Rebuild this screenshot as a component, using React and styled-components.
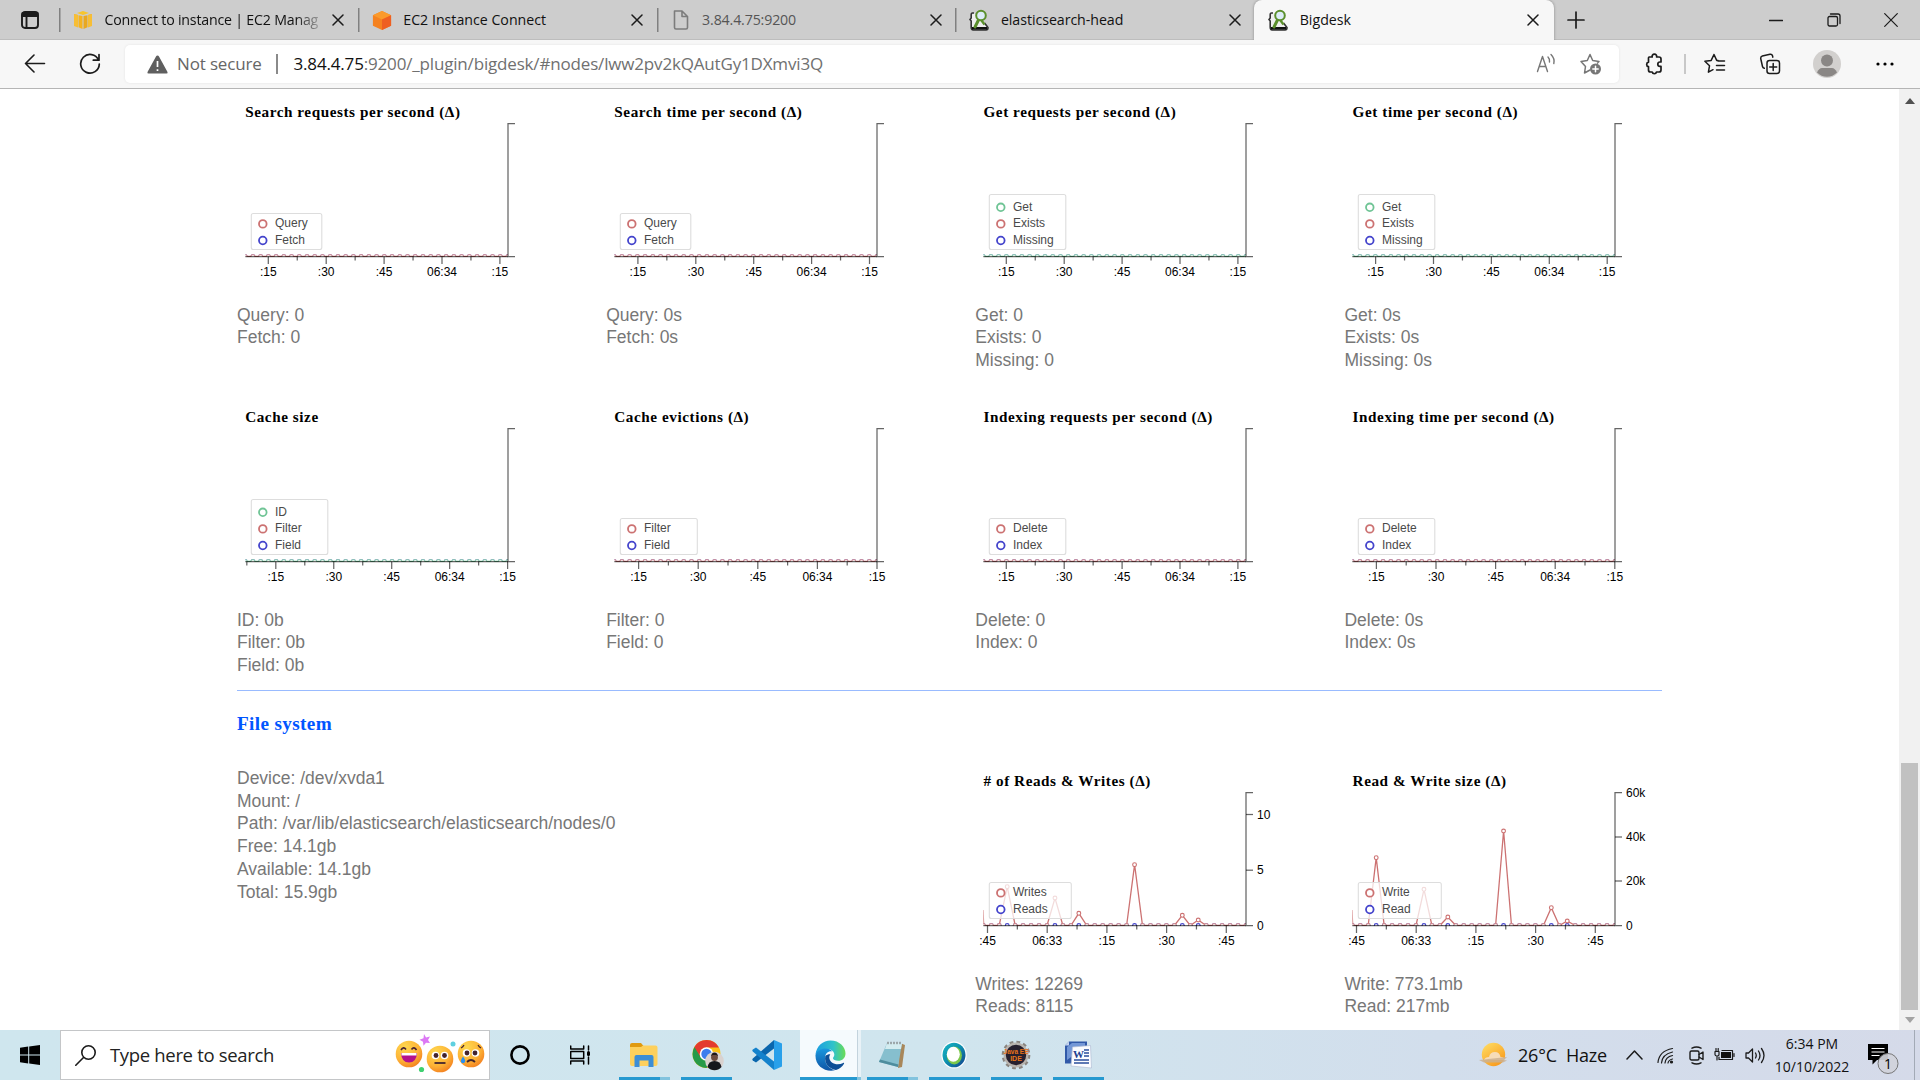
import React from "react";
import styled, { createGlobalStyle, css } from "styled-components";

const Global = createGlobalStyle`
  * { box-sizing: border-box; }
  html, body { margin: 0; padding: 0; overflow: hidden; background: #fff; }
  svg { display: block; flex: none; }
`;

const ui = `"Segoe UI", "Open Sans", "Noto Sans", sans-serif`;
const sans = `"Liberation Sans", Arial, sans-serif`;
const serif = `"Liberation Serif", "Times New Roman", serif`;

const Screen = styled.div`
  width: 1920px;
  height: 1080px;
  display: flex;
  flex-direction: column;
  overflow: hidden;
  font-family: ${ui};
`;

/* ---------- tab strip ---------- */
const TabStrip = styled.div`
  display: flex;
  height: 40px;
  background: #cdcdcd;
  box-shadow: inset 0 -1px 0 #bdbdbd;
`;
const TabActions = styled.div`
  width: 59px;
  display: flex;
  align-items: center;
  padding-left: 20px;
`;
const Tab = styled.div`
  width: 298.8px;
  height: 40px;
  display: flex;
  align-items: center;
  padding: 0 13.5px 0 14px;
  color: ${(p) => p.$color || "#111"};
  background: linear-gradient(#808080, #808080) 0 8px / 1.5px 24px no-repeat;
  ${(p) =>
    p.$active &&
    css`
      background: #f7f7f7;
      border-radius: 8px 8px 0 0;
      width: 300px;
      padding-right: 15px;
      box-shadow: 0 0 3px rgba(0, 0, 0, 0.35);
      clip-path: inset(0 -4px 0 -4px);
    `}
`;
const TabLabel = styled.div`
  flex: 1;
  margin: 0 10px 0 11.500px;
  overflow: hidden;
  white-space: nowrap;
  font-size: 14.2px;
  line-height: 22px;
  letter-spacing: ${(p) => p.$ls || 0}px;
  ${(p) => p.$fade && css`mask-image: linear-gradient(90deg, #000 88%, transparent 102%);`}
`;
const NewTab = styled.div`
  width: 44px;
  display: flex;
  align-items: center;
  justify-content: center;
`;
const WindowButtons = styled.div`
  margin-left: auto;
  display: flex;
`;
const WindowButton = styled.div`
  width: 57.5px;
  display: flex;
  align-items: center;
  justify-content: center;
`;

/* ---------- toolbar ---------- */
const Toolbar = styled.div`
  height: 49px;
  display: flex;
  align-items: center;
  background: #f7f7f7;
  border-bottom: 1px solid #b5b5b5;
`;
const NavButton = styled.div`
  width: ${(p) => p.$w || 55}px;
  display: flex;
  justify-content: center;
`;
const AddressBar = styled.div`
  width: 1494px;
  height: 38px;
  display: flex;
  align-items: center;
  background: #fff;
  border-radius: 5px;
  box-shadow: 0 0 3px rgba(0, 0, 0, 0.08);
  padding: 0 17px 0 22px;
  font-size: 17px;
  color: #707070;
`;
const Security = styled.span`
  margin-left: 9px;
  width: 99px;
  padding-bottom: 2px;
  letter-spacing: ${(p) => p.$ls}px;
  color: #666;
  white-space: nowrap;
`;
const Divider = styled.span`
  width: 1.5px;
  height: ${(p) => p.$h || 20}px;
  margin-left: ${(p) => p.$ml || 0}px;
  background: ${(p) => p.$c || "#8a8a8a"};
`;
const Url = styled.span`
  flex: 1;
  margin-left: 16px;
  padding-bottom: 2px;
  letter-spacing: ${(p) => p.$ls}px;
  white-space: nowrap;
  b { font-weight: 400; color: #111; }
`;

/* ---------- page ---------- */
const Viewport = styled.div`
  flex: 1;
  min-height: 0;
  display: flex;
  background: #fff;
`;
const Page = styled.main`
  flex: 1;
  padding: 11px 0 0 237px;
  overflow: hidden;
`;
const Row = styled.section`
  display: grid;
  grid-template-columns: repeat(4, 369.15px);
  height: ${(p) => p.$h}px;
`;
const Cell = styled.div`
  grid-column: span ${(p) => p.$span || 1};
`;
const ChartTitle = styled.h3`
  margin: 0 0 0 8.2px;
  height: 22px;
  padding-top: 1px;
  font: bold 15.2px/22px ${serif};
  letter-spacing: 0.56px;
  color: #000;
  white-space: nowrap;
`;
const Stats = styled.div`
  padding-top: ${(p) => p.$top ?? 13.5}px;
  margin-top: ${(p) => p.$pull || 0}px;
  font: 17.5px/22.75px ${sans};
  color: #777;
  white-space: nowrap;
`;
const Rule = styled.hr`
  width: 1425px;
  height: 1px;
  margin: 0;
  border: 0;
  background: #99bbff;
`;
const SectionTitle = styled.h2`
  margin: 20px 0 0;
  height: 58px;
  font: bold 19.2px/26px ${serif};
  letter-spacing: 0.35px;
  color: #0055ff;
`;
const ScrollTrack = styled.div`
  width: 21px;
  display: flex;
  flex-direction: column;
  align-items: center;
  justify-content: space-between;
  padding: 9px 0 7px;
  background: #f1f1f1;
`;
const Thumb = styled.div`
  width: 17px;
  height: 247px;
  margin: auto 0 7px;
  background: #c1c1c1;
`;

/* ---------- taskbar ---------- */
const Taskbar = styled.div`
  height: 50px;
  display: flex;
  align-items: stretch;
  background: linear-gradient(90deg, #cfe6ee 0%, #d0e5ee 50%, #d2deec 75%, #d5dae9 100%);
  color: #111;
`;
const Start = styled.div`
  width: 60px;
  display: flex;
  align-items: center;
  justify-content: center;
`;
const SearchBox = styled.div`
  width: 430px;
  display: flex;
  align-items: center;
  background: #fff;
  border: 1px solid #c4c6c8;
  padding: 0 4px 0 14px;
  font-size: 18.5px;
  color: #222;
`;
const SearchText = styled.span`
  flex: 1;
  margin-left: 14px;
  padding-bottom: 1px;
  letter-spacing: ${(p) => p.$ls}px;
  white-space: nowrap;
`;
const TaskItem = styled.div`
  width: ${(p) => p.$w || 62}px;
  height: 50px;
  display: flex;
  flex-direction: column;
  align-items: center;
  justify-content: center;
`;
const RunningApp = styled(TaskItem)`
  padding-top: 3px;
  justify-content: space-between;
  ${(p) => p.$active && css`background: linear-gradient(90deg, #f5fafd 57px, #c3d3dd 57px, #c3d3dd 58px, #e9f2f7 58px); `}
`;
const IconHold = styled.div`
  flex: 1;
  display: flex;
  align-items: center;
  padding-right: ${(p) => p.$shift || 0}px;
  padding-left: ${(p) => p.$push || 0}px;
`;
const Bar = styled.div`
  width: ${(p) => p.$w || 51}px;
  height: 3px;
  background: ${(p) => (p.$split ? `linear-gradient(90deg, #2699d0 ${p.$split}px, #82c3de ${p.$split}px)` : "#2699d0")};
`;
const Tray = styled.div`
  margin-left: auto;
  display: flex;
  align-items: center;
`;
const Weather = styled.div`
  display: flex;
  align-items: center;
  width: 147px;
  font-size: 18px;
  white-space: nowrap;
  letter-spacing: ${(p) => p.$ls}px;
`;
const Temp = styled.span`
  width: 48px;
  margin-left: 11px;
`;
const TrayIcon = styled.div`
  width: ${(p) => p.$w}px;
  display: flex;
  justify-content: flex-start;
`;
const Clock = styled.div`
  width: 84px;
  text-align: center;
  font-size: 14px;
  line-height: 23px;
  letter-spacing: ${(p) => p.$ls}px;
  white-space: nowrap;
`;
const Notice = styled.div`
  width: 60px;
  padding: 5px 0 0 14px;
`;
const ShowDesktop = styled.div`
  width: 6px;
  height: 50px;
  border-left: 1px solid #a3aab6;
`;

/* ---------- charts ---------- */
const RED = "#cc7272";
const BLUE = "#4444cc";
const GREEN = "#6fc495";

const Plot = styled.svg`
  overflow: visible;
`;
const AxisLabel = styled.text`
  font: 12px ${sans};
  fill: #000;
  text-anchor: ${(p) => p.$anchor || "middle"};
`;
const LegendLabel = styled.text`
  font: 12px ${sans};
  fill: #4a4a4a;
`;

const X0 = 8.4;
const X1 = 271;
const TOP = 1.5;
const BASE = 134.5;

function Chart({ id, first, step, labels, legend, legendWidth, peaks = [], dot = 7.73, yTicks = [], lead = false }) {
  const dots = [];
  for (let x = X1; x > X0 - 2; x -= dot) dots.unshift(x);
  const at = (x) => {
    const p = peaks.find((q) => Math.abs(q[0] - x) < dot / 2);
    return p ? p[1] : BASE;
  };
  const isPeak = (x) => at(x) < BASE;
  const color = legend[0][1];
  const pts = dots.map((x) => [x, at(x)]);
  const line = pts.map(([x, y]) => `${x.toFixed(1)},${y}`).join(" ");
  const ticks = [];
  for (let k = -1; k <= 9; k++) {
    const x = first + (k * step) / 2;
    if (x >= X0 && x <= X1 + 1) ticks.push([x, k % 2 === 0, k / 2]);
  }
  const lh = legend.length * 16.6 + (legend.length === 3 ? 5.2 : 2.8);
  const ly = 127.5 - lh;
  return (
    <Plot width="340" height="168" viewBox="0 0 340 168">
      <clipPath id={id}><rect x={X0} y="0" width={X1 - X0} height={BASE + 0.5} /></clipPath>
      <g clipPath={`url(#${id})`} fill="#fff" strokeWidth="1.1">
        {dots.map((x) => <circle key={x} cx={x} cy={BASE} r="1.9" stroke={BLUE} strokeOpacity={isPeak(x) ? 1 : 0.6} />)}
        {lead && <line x1={X0 - 0.3} y1="119" x2={X0 + 0.4} y2={BASE} stroke={color} />}
        <polyline points={line} fill="none" stroke={color} strokeWidth="1.3" />
        {pts.map(([x, y]) => <circle key={x} cx={x} cy={y} r="1.9" stroke={color} strokeOpacity={y < BASE ? 1 : 0.7} />)}
      </g>
      <g fill="none" stroke="#000" strokeOpacity="0.6" strokeWidth="1.25">
        <path d={`M278 ${TOP}H${X1}V${BASE}H278`} />
        <path d={`M${X0} ${BASE}H${X1}`} />
        {ticks.map(([x, major]) => <path key={x} d={`M${x} ${BASE}V${BASE + (major ? 7.5 : 4)}`} />)}
        {yTicks.map(([y]) => y < BASE && y > TOP + 1 && <path key={y} d={`M${X1} ${y}h7`} />)}
      </g>
      {ticks.filter((t) => t[1]).map(([x, , k]) => <AxisLabel key={x} x={x} y="154">{labels[k]}</AxisLabel>)}
      {yTicks.map(([y, t]) => <AxisLabel key={t} $anchor="start" x="282" y={y + 4.2}>{t}</AxisLabel>)}
      <rect x="14.3" y={ly} width={legendWidth} height={lh} rx="2" fill="#fff" fillOpacity="0.75" stroke="#ddd" strokeWidth="1.1" />
      {legend.map(([name, c], i) => {
        const y = 118.5 - (legend.length - 1 - i) * 16.6;
        return (
          <g key={name}>
            <circle cx="25.8" cy={y} r="3.8" fill="#fff" stroke={c} strokeWidth="1.8" />
            <LegendLabel x="38" y={y + 3.4}>{name}</LegendLabel>
          </g>
        );
      })}
    </Plot>
  );
}

const A = [":15", ":30", ":45", "06:34", ":15"];
const B = [":45", "06:33", ":15", ":30", ":45"];

const rowOne = [
  { title: "Search requests per second (Δ)", first: 31.3, step: 57.9, w: 70.5, legend: [["Query", RED], ["Fetch", BLUE]], stats: ["Query: 0", "Fetch: 0"] },
  { title: "Search time per second (Δ)", first: 31.9, step: 57.9, w: 70.5, legend: [["Query", RED], ["Fetch", BLUE]], stats: ["Query: 0s", "Fetch: 0s"] },
  { title: "Get requests per second (Δ)", first: 31.3, step: 57.9, w: 76.5, legend: [["Get", GREEN], ["Exists", RED], ["Missing", BLUE]], stats: ["Get: 0", "Exists: 0", "Missing: 0"] },
  { title: "Get time per second (Δ)", first: 31.6, step: 57.9, w: 76.5, legend: [["Get", GREEN], ["Exists", RED], ["Missing", BLUE]], stats: ["Get: 0s", "Exists: 0s", "Missing: 0s"] },
];
const rowTwo = [
  { title: "Cache size", first: 38.8, step: 57.95, w: 76.5, legend: [["ID", GREEN], ["Filter", RED], ["Field", BLUE]], stats: ["ID: 0b", "Filter: 0b", "Field: 0b"] },
  { title: "Cache evictions (Δ)", first: 32.6, step: 59.6, w: 77, legend: [["Filter", RED], ["Field", BLUE]], stats: ["Filter: 0", "Field: 0"] },
  { title: "Indexing requests per second (Δ)", first: 31.3, step: 57.9, w: 76.5, legend: [["Delete", RED], ["Index", BLUE]], stats: ["Delete: 0", "Index: 0"] },
  { title: "Indexing time per second (Δ)", first: 32.4, step: 59.6, w: 76.5, legend: [["Delete", RED], ["Index", BLUE]], stats: ["Delete: 0s", "Index: 0s"] },
];
const rowThree = [
  {
    title: "# of Reads & Writes (Δ)", first: 12.5, step: 59.7, w: 82, dot: 7.96, lead: true, labels: B,
    legend: [["Writes", RED], ["Reads", BLUE]], stats: ["Writes: 12269", "Reads: 8115"],
    peaks: [[32, 95.7], [79.8, 107], [103.6, 122.3], [159.4, 73.7], [207.2, 124.3], [223.1, 129]],
    yTicks: [[23.5, "10"], [79.2, "5"], [134.5, "0"]],
  },
  {
    title: "Read & Write size (Δ)", first: 12.5, step: 59.7, w: 83, dot: 7.96, lead: true, labels: B,
    legend: [["Write", RED], ["Read", BLUE]], stats: ["Write: 773.1mb", "Read: 217mb"],
    peaks: [[32, 66.7], [79.8, 98.3], [103.6, 126], [159.4, 40], [207.2, 116.7], [223.1, 130]],
    yTicks: [[1.5, "60k"], [46, "40k"], [90, "20k"], [134.5, "0"]],
  },
];
const disk = ["Device: /dev/xvda1", "Mount: /", "Path: /var/lib/elasticsearch/elasticsearch/nodes/0", "Free: 14.1gb", "Available: 14.1gb", "Total: 15.9gb"];

const ChartCell = ({ c }) => (
  <Cell>
    <ChartTitle>{c.title}</ChartTitle>
    <Chart id={c.title.replace(/\W/g, "")} labels={c.labels || A} {...c} legendWidth={c.w} />
    <Stats>{c.stats.map((s) => <div key={s}>{s}</div>)}</Stats>
  </Cell>
);

/* ---------- icons ---------- */
const Ic = ({ w = 20, h = w, vb, sw = 1.4, c = "#1b1b1b", children, fill = "none" }) => (
  <svg width={w} height={h} viewBox={vb || `0 0 ${w} ${h}`} fill={fill} stroke={c} strokeWidth={sw} strokeLinecap="round" strokeLinejoin="round">{children}</svg>
);
const Close = () => <Ic w={12} sw={1.5}><path d="M1 1l10 10M11 1L1 11" /></Ic>;
const CubeYellow = () => (
  <svg width="20" height="20" viewBox="0 0 20 20">
    <path d="M10 1l6 2-6 2-6-2z" fill="#f7c52d" /><path d="M1 4l4 1v10l-4-2zM5.500 5.200L9.500 6v13l-4-1.700z" fill="#f5b31f" />
    <path d="M19 4l-4 1v10l4-2zM14.500 5.200L10.500 6v13l4-1.700z" fill="#e9a820" /><path d="M1 4v12l4 1.500V5zM19 4v12l-4 1.500V5z" fill="#f7be35" />
  </svg>
);
const CubeOrange = () => (
  <svg width="20" height="21" viewBox="0 0 22 22" preserveAspectRatio="none">
    <path d="M11 1l10 4.500v11L11 21 1 16.500v-11z" fill="#f58220" /><path d="M11 1l10 4.500L11 10 1 5.500z" fill="#fb9a2b" />
    <path d="M11 10l10-4.500v11L11 21z" fill="#ee5f22" />
  </svg>
);
const FileIcon = () => <Ic w={20} c="#7c7c7c" sw={1.6}><path d="M3.500 1h7.500l5.500 5.500v11a1.500 1.500 0 0 1-1.500 1.500H5A1.500 1.500 0 0 1 3.500 17.500zM11 1v5.500h5.500" /></Ic>;
const HeadIcon = () => (
  <svg width="20" height="22" viewBox="0 0 20 22">
    <path d="M5 4H3.500Q2.200 4 2.200 6v3L1 10.500 2.200 12v6q0 3 2 3H17q2 0 2-2.500L15.500 14" fill="#efefef" stroke="#333" strokeWidth="1.600" />
    <path d="M3 18h15v2.500H3z" fill="#111" />
    <path d="M10 10L6 18" stroke="#5b8f2c" strokeWidth="3" strokeLinecap="round" />
    <circle cx="12" cy="6.500" r="4.800" fill="#dcecf8" stroke="#5b8f2c" strokeWidth="2" /><path d="M12.500 11.500l3 4" stroke="#5b8f2c" strokeWidth="2.400" />
  </svg>
);
const Face = ({ x, y, kind }) => (
  <g transform={`translate(${x} ${y})`}>
    <circle r="13.300" fill="url(#face)" />
    {kind === "grin" && <><path d="M-8-4q2.500-4 5-0.500M2.500-4.500q2.500-3.500 5 0.500" stroke="#4a2333" strokeWidth="1.600" fill="none" /><path d="M-8-1H8Q7.500 8.500 0 8.500T-8-1z" fill="#b4128c" /><path d="M-7.500-1h15v2.500h-15z" fill="#fff" /></>}
    {kind === "flat" && <><circle cx="-4.500" cy="-3.500" r="3.800" fill="#fff" /><circle cx="4.500" cy="-3.500" r="3.800" fill="#fff" /><circle cx="-4" cy="-3.500" r="2.400" fill="#43242e" /><circle cx="4.500" cy="-3.500" r="2.400" fill="#43242e" /><path d="M-5.500 4H5.500" stroke="#43242e" strokeWidth="1.800" /></>}
    {kind === "sad" && <><circle cx="-4.500" cy="-1" r="3.800" fill="#fff" /><circle cx="4.500" cy="-1" r="3.800" fill="#fff" /><circle cx="-4" cy="-1" r="2.400" fill="#43242e" /><circle cx="4" cy="-1" r="2.400" fill="#43242e" /><path d="M-4 8q4-4 8 0" stroke="#43242e" strokeWidth="1.800" fill="none" /><path d="M-10-6q2-1 3-3M10-6q-2-1-3-3" stroke="#43242e" strokeWidth="1.200" fill="none" /><path d="M-8 2.500q3 4 2 5.500-2 2.500-4 0-.6-2 2-5.500z" fill="#2a8ff0" /></>}
  </g>
);
const Emojis = () => (
  <svg width="90" height="46" viewBox="0 0 90 46">
    <defs><radialGradient id="face" cx="35%" cy="25%" r="85%"><stop offset="0" stopColor="#ffd84f" /><stop offset="0.600" stopColor="#fdb336" /><stop offset="1" stopColor="#f2781c" /></radialGradient></defs>
    <Face x={14} y={22} kind="grin" /><Face x={45} y={27} kind="flat" /><Face x={76} y={22} kind="sad" />
    <path d="M29 2l2 3.500 4-1-2 3.500 2 3-4-.3-2.500 3-.5-4-3.500-2 4-1.500z" fill="#dc78f5" />
    <circle cx="58" cy="12" r="2.500" fill="#5fd0e0" /><circle cx="26.500" cy="37.500" r="2.600" fill="#3fd070" />
  </svg>
);
const Folder = () => (
  <svg width="28" height="24" viewBox="0 0 28 24">
    <path d="M0 2q0-2 2-2h9l2.500 3v3H0z" fill="#e09a10" /><path d="M0 4h11l2-1.500h12.500q2 0 2 2V21q0 2-2 2H2q-2 0-2-2z" fill="#fdd05c" />
    <path d="M4.500 24V14q0-2 2-2h15q2 0 2 2v10h-5v-6.500h-9V24z" fill="#3c8ed6" />
  </svg>
);
const Chrome = () => (
  <svg width="32" height="32" viewBox="0 0 32 32">
    <circle cx="14.500" cy="15" r="14" fill="#fbc116" /><path d="M14.500 15L2.400 8a14 14 0 0 0 12 21l7-7z" fill="#269a48" />
    <path d="M2.400 8L8.500 18 14.500 8.500H26.900A14 14 0 0 0 2.400 8z" fill="#e33b2e" />
    <circle cx="14.500" cy="15" r="6.800" fill="#fff" /><circle cx="14.500" cy="15" r="5.200" fill="#3b7ded" />
    <circle cx="22.500" cy="22" r="9.300" fill="#d9d2cf" /><circle cx="22.500" cy="18.500" r="3.400" fill="#6c4a3d" /><path d="M19 17.500q.5-4 3.500-4t3.500 4l-1.500-1.500h-4z" fill="#1c1718" /><path d="M15.500 28q1-6 7-6t7 6q-3 3.300-7 3.300t-7-3.300z" fill="#16171c" />
  </svg>
);
const VSCode = () => (
  <svg width="30" height="30" viewBox="0 0 30 30">
    <path d="M22 0v8.500L4 22.500 0.800 20.500q-1-1 0-2z" fill="#0a66ad" /><path d="M22 30v-8.500L4 7.500.8 9.500q-1 1 0 2z" fill="#1482cc" />
    <path d="M22 0l8 3.500v23L22 30z" fill="#29a0ea" />
  </svg>
);
const Edge = () => (
  <svg width="31" height="31" viewBox="0 0 31 31">
    <defs>
      <linearGradient id="e1" x1="0" x2="1"><stop offset="0" stopColor="#1b9de2" /><stop offset="0.600" stopColor="#2fc3c9" /><stop offset="1" stopColor="#6bdc53" /></linearGradient>
      <linearGradient id="e2" x1="0" y1="0" x2="0" y2="1"><stop offset="0" stopColor="#1a97de" /><stop offset="1" stopColor="#0f55a5" /></linearGradient>
    </defs>
    <path d="M.5 14.500C1.500 6 8 .5 15.500.5 24.500.5 30.500 7 30.500 13.500c0 4.500-3.200 7.300-7.300 7.300-3 0-5.200-1.300-5.200-2.600 0-1 1.300-1.400 1.300-3.700 0-3-3-5.500-6.800-5.500-6 0-10.500 3-12 5.500z" fill="url(#e1)" />
    <path d="M.5 15C1.500 11 6 8.500 10.500 8.500c3 0 5.500 1 7 3-4-.8-7.500 2-7.500 6.500C10 25 15.500 29 20 30.300 10 32.500.0 26 .5 15z" fill="url(#e2)" />
    <path d="M10.300 16c-1.500 8 4.500 13 10.700 14 3.500-1 6.500-3.500 8-6.300.4-.8-.3-1-.8-.7-6 3-13.700.5-13.900-5.500 0-1.300.5-2.500 1-3.300-2 0-4 .5-5 1.800z" fill="#0d4f97" />
  </svg>
);
const Notepad = () => (
  <svg width="28" height="28" viewBox="0 0 28 28">
    <path d="M22 2l5 2-3 22-4 1z" fill="#a8875a" /><path d="M9 2h15l-4 24L1 21z" fill="#86bfce" /><path d="M9 2h15l-1 6L7 8z" fill="#d3ecf0" /><path d="M1 21l19 5 .5-2.500L2 18.500z" fill="#4e8d9e" />
    <path d="M10 .8v2.400M13 .8v2.400M16 .8v2.400M19 .8v2.400M22 .8v2.400" stroke="#666" strokeWidth="1" />
  </svg>
);
const Webex = () => (
  <svg width="26" height="28" viewBox="0 0 26 28">
    <defs><linearGradient id="wx" x1="0" y1="0" x2="1" y2="1"><stop offset="0" stopColor="#18b5c4" /><stop offset="0.450" stopColor="#0f93b0" /><stop offset="1" stopColor="#123f8c" /></linearGradient></defs>
    <ellipse cx="13" cy="14" rx="12.700" ry="13.500" fill="#fff" /><ellipse cx="13" cy="14" rx="11.500" ry="12.300" fill="url(#wx)" />
    <ellipse cx="13.300" cy="14.500" rx="7.600" ry="8.900" fill="#7cc84a" /><ellipse cx="12.300" cy="13.300" rx="6.500" ry="7.500" fill="#fff" />
  </svg>
);
const JavaGear = () => (
  <svg width="30" height="30" viewBox="0 0 30 30">
    <circle cx="15" cy="15" r="12.600" fill="none" stroke="#8a8580" strokeWidth="3.500" strokeDasharray="3.600 3" /><circle cx="15" cy="15" r="11.300" fill="#26202e" stroke="#b9b4ae" strokeWidth="2.200" />
    <text x="15" y="14" textAnchor="middle" fontFamily="Liberation Sans" fontWeight="bold" fontSize="6.500" fill="#e8751a">Java EE</text>
    <text x="15" y="21" textAnchor="middle" fontFamily="Liberation Sans" fontWeight="bold" fontSize="7" fill="#e8751a">IDE</text>
  </svg>
);
const Word = () => (
  <svg width="28" height="28" viewBox="0 0 28 28">
    <path d="M5 .5h18v22H1V4.500z" fill="#3159a8" /><path d="M5 .5v4H1z" fill="#c6d4ef" /><path d="M3 6l5-4h13v4L3 19z" fill="#7397d6" />
    <path d="M8.500 6l18-1.500L27.500 27 7 25z" fill="#fbfcff" stroke="#b3bfd6" strokeWidth=".7" />
    <text x="9" y="17" fontFamily="Liberation Serif" fontWeight="bold" fontSize="11" fill="#1f418f">W</text>
    <path d="M20 9h5M20 12h5M20 15h5M10 19h15M10 22h15" stroke="#2a4e9c" strokeWidth="1.300" />
  </svg>
);
const WeatherIcon = () => (
  <svg width="28" height="26" viewBox="0 0 28 26">
    <defs><linearGradient id="sun" x1="0" y1="0" x2="0.700" y2="1"><stop offset="0" stopColor="#ffe066" /><stop offset="1" stopColor="#f99a1c" /></linearGradient></defs>
    <circle cx="14.500" cy="12.500" r="11.700" fill="url(#sun)" />
    <path d="M1 18h4q1-3 5-3 1-5 6-5 4.500 0 5.500 5 4 0 4 3h3" fill="#f6dcb8" /><path d="M0 18q14-1.500 28-3l-3 3 3 .5-4 2H5z" fill="#cbb091" opacity=".85" />
  </svg>
);

export default function App() {
  return (
    <Screen>
      <Global />
      <TabStrip>
        <TabActions>
          <Ic w={20} sw={1.900}><rect x="2" y="2" width="16" height="16" rx="3" /><path d="M2.500 3h15v3h-15zM6.500 6v12" fill="#1b1b1b" /></Ic>
        </TabActions>
        <Tab><CubeYellow /><TabLabel $fade $ls={-0.2}>Connect to instance | EC2 Manag</TabLabel><Close /></Tab>
        <Tab><CubeOrange /><TabLabel $ls={0}>EC2 Instance Connect</TabLabel><Close /></Tab>
        <Tab $color="#555"><FileIcon /><TabLabel $ls={-0.15}>3.84.4.75:9200</TabLabel><Close /></Tab>
        <Tab><HeadIcon /><TabLabel $ls={-0.05}>elasticsearch-head</TabLabel><Close /></Tab>
        <Tab $active><HeadIcon /><TabLabel $ls={0}>Bigdesk</TabLabel><Close /></Tab>
        <NewTab><Ic w={18} sw={1.700}><path d="M9 1v16M1 9h16" /></Ic></NewTab>
        <WindowButtons>
          <WindowButton><Ic w={14} sw={1.300}><path d="M.5 7.500h13" /></Ic></WindowButton>
          <WindowButton><Ic w={14} sw={1.300}><rect x="1" y="3.500" width="9.500" height="9.500" rx="1.500" /><path d="M3.500 1h7.500a2 2 0 0 1 2 2v7.500" /></Ic></WindowButton>
          <WindowButton><Ic w={14} sw={1.200}><path d="M.7.7l12.600 12.600M13.300.7L.7 13.300" /></Ic></WindowButton>
        </WindowButtons>
      </TabStrip>

      <Toolbar>
        <NavButton $w={70}><Ic w={22} h={20} sw={1.600}><path d="M20.500 9.500H1.500M10 1L1.500 9.500l8.500 8.500" /></Ic></NavButton>
        <NavButton $w={40}><Ic w={22} sw={1.700}><path d="M19.500 7A9.300 9.300 0 1 0 20.300 11M20 1.500V7.200h-5.700" /></Ic></NavButton>
        <NavButton $w={15} />
        <AddressBar>
          <svg width="21" height="19" viewBox="0 0 21 19"><path d="M10.500.5q1 0 1.500 1l8.500 15.500q.5 1.500-1 1.500h-18q-1.500 0-1-1.500L9 1.500q.5-1 1.500-1z" fill="#5f5f5f" /><path d="M10.500 6v6M10.500 14.200v1.800" stroke="#fff" strokeWidth="1.700" /></svg>
          <Security $ls={-0.15}>Not secure</Security>
          <Divider />
          <Url $ls={-0.17}><b>3.84.4.75</b>:9200/_plugin/bigdesk/#nodes/lww2pv2kQAutGy1DXmvi3Q</Url>
          <Ic w={22} h={22} c="#767676" sw={1.400}><path d="M2.500 18.500L7.500 3.500 12.500 18.500M4.200 13.500h6.600M13 4q2 2 1.500 5M16 1.500q4 4 2.800 9" /></Ic>
          <NavButton $w={22} />
          <Ic w={23} h={22} c="#767676" sw={1.500}><path d="M11 17l-5.500 3 1-6.500L2 8.500l6.300-1L11 1.500l2.700 6 6.300 1-1.500 1.600" /><circle cx="16.500" cy="16" r="5.500" fill="#767676" stroke="none" /><path d="M16.500 13.300v5.400M13.800 16h5.400" stroke="#fff" /></Ic>
        </AddressBar>
        <NavButton $w={70}><Ic w={20} h={22} sw={1.700}><path d="M5 4h3.200a2.300 2.300 0 1 1 4.400 0H15a2 2 0 0 1 2 2v3h-1a2.200 2.200 0 0 0 0 4.400h1V17a2 2 0 0 1-2 2h-2.500a2.200 2.200 0 0 1-4.300 0H6.500a2 2 0 0 1-2-2v-3.300a2.300 2.300 0 0 1 0-4.500V6a2 2 0 0 1 .5-2z" /></Ic></NavButton>
        <Divider $c="#c8c8c8" $ml={-5} />
        <NavButton $w={59}><Ic w={22} sw={1.500}><path d="M14 7.600L12.700 7.400 10 1.500 7.200 7.400.9 8.300l4.600 4.500-1.100 6.400 4.600-2.500M14 8h6.500M12.500 12.500h8M12.500 17h8" /></Ic></NavButton>
        <NavButton $w={50}><Ic w={22} sw={1.500}><rect x="8" y="7.500" width="12.500" height="13" rx="2.500" /><path d="M14.200 10.500v7M10.700 14h7M5.300 15.300Q3.800 15 3.500 13.500L1.700 5.500Q1.500 3.500 3.300 3L11 1.200q2-.3 2.500 1.500l.3 1.500" /></Ic></NavButton>
        <NavButton $w={65}><svg width="28" height="28" viewBox="0 0 28 28"><circle cx="14" cy="14" r="14" fill="#d2d0ce" /><circle cx="14" cy="10.500" r="6" fill="#8a8785" /><path d="M4 22.500q2-4.500 5-4.500h10q3 0 5 4.500a14 14 0 0 1-20 0z" fill="#8a8785" /></svg></NavButton>
        <NavButton $w={50}><svg width="18" height="4" viewBox="0 0 18 4"><circle cx="2" cy="2" r="1.600" /><circle cx="9" cy="2" r="1.600" /><circle cx="16" cy="2" r="1.600" /></svg></NavButton>
      </Toolbar>

      <Viewport>
        <Page>
          <Row $h={305}>{rowOne.map((c) => <ChartCell key={c.title} c={c} />)}</Row>
          <Row $h={285}>{rowTwo.map((c) => <ChartCell key={c.title} c={c} />)}</Row>
          <Rule />
          <SectionTitle>File system</SectionTitle>
          <Row $h={262}>
            <Cell $span={2}><Stats $top={0} $pull={-2.2}>{disk.map((s) => <div key={s}>{s}</div>)}</Stats></Cell>
            {rowThree.map((c) => <ChartCell key={c.title} c={c} />)}
          </Row>
        </Page>
        <ScrollTrack>
          <svg width="10" height="6" viewBox="0 0 10 6"><path d="M0 6l5-6 5 6z" fill="#505050" /></svg>
          <Thumb />
          <svg width="10" height="6" viewBox="0 0 10 6"><path d="M0 0l5 6 5-6z" fill="#a3a3a3" /></svg>
        </ScrollTrack>
      </Viewport>

      <Taskbar>
        <Start><svg width="20" height="20" viewBox="0 0 20 20"><path d="M0 2.800L8.200 1.600V9.500H0zM9.200 1.500L20 0v9.500H9.200zM0 10.500h8.200v7.900L0 17.200zM9.200 10.500H20V20L9.200 18.500z" /></svg></Start>
        <SearchBox>
          <Ic w={21} sw={1.600}><circle cx="13.500" cy="7.500" r="6.700" /><path d="M8.500 12.500L.8 20.200" /></Ic>
          <SearchText $ls={-0.33}>Type here to search</SearchText>
          <Emojis />
        </SearchBox>
        <TaskItem $w={60}><svg width="22" height="22" viewBox="0 0 22 22"><circle cx="11" cy="11" r="8.600" fill="none" stroke="#000" strokeWidth="2.600" /></svg></TaskItem>
        <TaskItem $w={60}><Ic w={20} sw={1.500} c="#000"><path d="M.7 1v3h13V1M.7 19v-3h13v3M.7 6.500h13v7H.7zM18.500 1v4M18.500 12v7M18.500 7.500v2.500" /><path d="M18.500 7.500v2" strokeWidth="3" /></Ic></TaskItem>
        <RunningApp $w={69}><IconHold $shift={2}><Folder /></IconHold><Bar $split={41} /></RunningApp>
        <RunningApp $w={55}><IconHold $push={2}><Chrome /></IconHold><Bar /></RunningApp>
        <TaskItem $w={66}><VSCode /></TaskItem>
        <RunningApp $w={61} $active><IconHold $shift={1}><Edge /></IconHold><Bar $w={61} $split={57} /></RunningApp>
        <RunningApp $w={62}><IconHold $shift={1}><Notepad /></IconHold><Bar $split={41} /></RunningApp>
        <RunningApp><IconHold $shift={1}><Webex /></IconHold><Bar /></RunningApp>
        <RunningApp><IconHold $shift={0}><JavaGear /></IconHold><Bar /></RunningApp>
        <RunningApp><IconHold $shift={1}><Word /></IconHold><Bar /></RunningApp>
        <Tray>
          <Weather $ls={-0.2}><WeatherIcon /><Temp>26°C</Temp>Haze</Weather>
          <TrayIcon $w={31}><Ic w={17} h={10} sw={1.500}><path d="M1 9l7.500-8L16 9" /></Ic></TrayIcon>
          <TrayIcon $w={32}><Ic w={17} h={17} sw={1.200}><path d="M1 15.500Q2 4 15.500 1.500M4.500 16Q5 7.500 15.500 5M8 16q.5-6 7.500-7.500M11 16q.5-3 4.500-4" /><circle cx="14.500" cy="15" r="1" fill="#111" /></Ic></TrayIcon>
          <TrayIcon $w={25}><Ic w={15} h={19} sw={1.400}><rect x="1" y="5" width="9" height="9" rx="1.500" /><path d="M10 8.500l4-2.500v7.500l-4-2.500M3 2.200q4.500-2.400 9 0M3 16.800q4.500 2.400 9 0" /></Ic></TrayIcon>
          <TrayIcon $w={31}><Ic w={21} h={14} sw={1.200}><path d="M8 2.500h10.500v9H5V9M20 5.500v3M1 3.500v3q0 1.500 2 1.500t2-1.500v-3zM2 3.500v-3M4.200 3.500v-3M3 8v4" /><rect x="7" y="4" width="10" height="6" fill="#111" stroke="none" /></Ic></TrayIcon>
          <TrayIcon $w={25}><Ic w={21} h={17} sw={1.300}><path d="M1 6h2.500L7.500 2v13l-4-4H1zM10.500 6q1.500 2.500 0 5M13.500 4q3 4.500 0 9M16.500 1.500q5 7 0 14" /></Ic></TrayIcon>
          <Clock $ls={0}>6:34 PM<br />10/10/2022</Clock>
          <Notice>
            <svg width="32" height="32" viewBox="0 0 32 32"><path d="M0 2h20v16H9l-4.500 4.500V18H0z" fill="#000" /><path d="M3.500 6.500h13M3.500 10h13M3.500 13.500h8" stroke="#fff" strokeWidth="1.200" /><circle cx="20" cy="21.500" r="10" fill="#d0d3da" fillOpacity=".92" stroke="#777" /><text x="20" y="26.500" textAnchor="middle" fontFamily="Open Sans" fontSize="14" fill="#000">1</text></svg>
          </Notice>
          <ShowDesktop />
        </Tray>
      </Taskbar>
    </Screen>
  );
}
